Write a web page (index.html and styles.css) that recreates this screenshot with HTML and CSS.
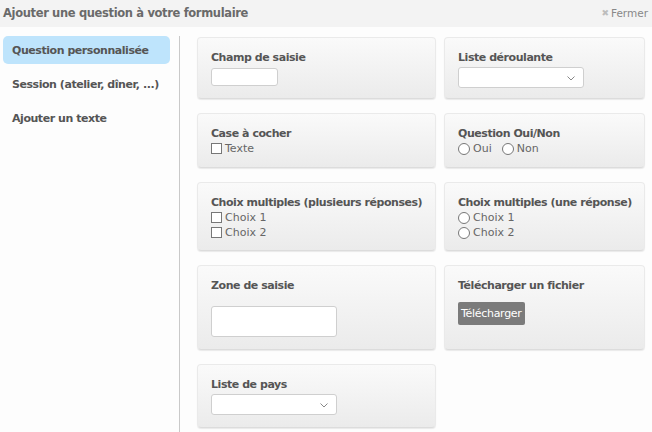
FILE: index.html
```html
<!DOCTYPE html>
<html lang="fr">
<head>
<meta charset="utf-8">
<title>Ajouter une question</title>
<link rel="stylesheet" href="styles.css">
</head>
<body>
<div class="dialog">
  <header class="head">
    <h1 class="head-title">Ajouter une question à votre formulaire</h1>
    <a class="close"><span class="close-x">✖</span>Fermer</a>
  </header>
  <div class="main">
    <nav class="side">
      <div class="side-item active">Question personnalisée</div>
      <div class="side-item">Session (atelier, dîner, ...)</div>
      <div class="side-item">Ajouter un texte</div>
    </nav>
    <section class="cards">
      <div class="card">
        <div class="card-title">Champ de saisie</div>
        <div class="input small"></div>
      </div>
      <div class="card">
        <div class="card-title">Liste déroulante</div>
        <div class="select sel1"><svg class="chev" width="8" height="5" viewBox="0 0 8 5"><path d="M0.5 0.5 L4 4 L7.5 0.5" fill="none" stroke="#888" stroke-width="1"/></svg></div>
      </div>
      <div class="card">
        <div class="card-title">Case à cocher</div>
        <div class="opt"><span class="cb"></span>Texte</div>
      </div>
      <div class="card">
        <div class="card-title">Question Oui/Non</div>
        <div class="opt"><span class="rd"></span>Oui<span class="rd rd2"></span>Non</div>
      </div>
      <div class="card">
        <div class="card-title">Choix multiples (plusieurs réponses)</div>
        <div class="opt"><span class="cb"></span>Choix 1</div>
        <div class="opt"><span class="cb"></span>Choix 2</div>
      </div>
      <div class="card">
        <div class="card-title">Choix multiples (une réponse)</div>
        <div class="opt"><span class="rd"></span>Choix 1</div>
        <div class="opt"><span class="rd"></span>Choix 2</div>
      </div>
      <div class="card">
        <div class="card-title">Zone de saisie</div>
        <div class="input area"></div>
      </div>
      <div class="card">
        <div class="card-title">Télécharger un fichier</div>
        <div class="btn">Télécharger</div>
      </div>
      <div class="card">
        <div class="card-title">Liste de pays</div>
        <div class="select sel2"><svg class="chev" width="8" height="5" viewBox="0 0 8 5"><path d="M0.5 0.5 L4 4 L7.5 0.5" fill="none" stroke="#888" stroke-width="1"/></svg></div>
      </div>
    </section>
  </div>
</div>
</body>
</html>
```
FILE: styles.css
```css
* { box-sizing: border-box; }
html, body { margin: 0; padding: 0; }
body {
  width: 652px;
  height: 432px;
  overflow: hidden;
  background: #fdfdfd;
  font-family: "DejaVu Sans", Verdana, sans-serif;
  font-size: 11px;
  color: #555;
}
.dialog { display: flex; flex-direction: column; height: 432px; }
.head {
  height: 27px;
  background: #f3f3f3;
  display: flex;
  align-items: center;
  justify-content: space-between;
  padding: 0 4px 0 3px;
  flex: none;
}
.head-title {
  margin: 0;
  font-size: 11.5px;
  font-weight: bold;
  color: #6a6a6a;
  letter-spacing: -0.35px;
  padding-bottom: 2px;
}
.close {
  font-size: 10.5px;
  color: #888;
  display: flex;
  align-items: center;
  padding-bottom: 2px;
}
.close-x { color: #bdbdbd; font-size: 9px; margin-right: 2px; }
.main { flex: 1; display: flex; padding-top: 9px; }
.side {
  width: 180px;
  flex: none;
  border-right: 1px solid #c9c9c9;
  padding: 0 9px 0 3px;
  display: flex;
  flex-direction: column;
  gap: 6px;
}
.side-item {
  height: 28px;
  display: flex;
  align-items: center;
  padding-left: 9px;
  font-weight: bold;
  color: #555;
  border-radius: 5px;
  white-space: nowrap;
  letter-spacing: -0.45px;
}
.side-item.active { background: #bee4fc; }
.cards {
  padding: 1px 0 0 17px;
  display: grid;
  grid-template-columns: 239px 201px;
  grid-template-rows: 62px 55px 69px 85px 64px;
  column-gap: 8px;
  row-gap: 14px;
  align-content: start;
}
.card {
  background: linear-gradient(#fafafa, #ebebeb);
  border: 1px solid #eaeaea;
  border-bottom-color: #dcdcdc;
  border-radius: 4px;
  box-shadow: 0 1px 1px rgba(0,0,0,0.08);
  padding: 12px 13px 0 13px;
  line-height: 15px;
}
.card-title {
  font-weight: bold;
  color: #555;
  white-space: nowrap;
  letter-spacing: -0.45px;
}
.input, .select {
  background: #fff;
  border: 1px solid #cfcfcf;
  border-radius: 3px;
}
.input.small { width: 67px; height: 18px; margin-top: 3px; }
.input.area { width: 126px; height: 31px; margin-top: 13px; }
.select { position: relative; height: 21px; }
.sel1 { width: 126px; margin-top: 2px; }
.sel2 { width: 126px; margin-top: 2px; }
.chev { position: absolute; right: 8px; top: 8px; }
.opt {
  display: flex;
  align-items: center;
  color: #666;
  height: 15px;
}
.cb {
  width: 11px; height: 11px;
  border: 1px solid #777;
  background: #fff;
  margin-right: 3px;
  flex: none;
}
.rd {
  width: 12px; height: 12px;
  border: 1px solid #777;
  border-radius: 50%;
  background: #fff;
  margin-right: 3px;
  flex: none;
}
.rd2 { margin-left: 10px; }
.btn {
  display: inline-block;
  margin-top: 9px;
  background: #7b7b7b;
  color: #fff;
  border-radius: 2px;
  height: 23px;
  line-height: 23px;
  padding: 0 3px;
  letter-spacing: -0.3px;
}
```
